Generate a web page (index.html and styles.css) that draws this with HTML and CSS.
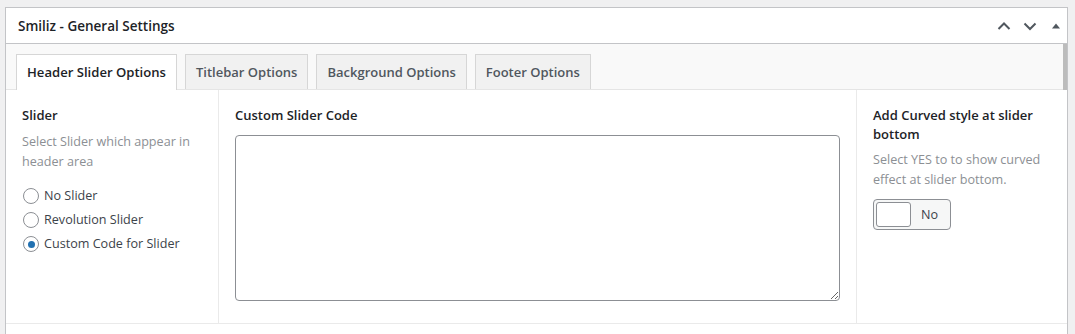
FILE: index.html
```html
<!DOCTYPE html>
<html lang="en">
<head>
    <meta charset="UTF-8">
    <meta name="viewport" content="width=device-width, initial-scale=1.0">
    <title>Smiliz - General Settings</title>
    <link rel="stylesheet" href="styles.css">
</head>
<body>
    <div class="postbox">
        <div class="postbox-header">
            <h2 class="postbox-title">Smiliz - General Settings</h2>
            <div class="handle-actions">
                <button class="handle-btn" aria-label="Move up">
                    <svg width="16" height="16" viewBox="0 0 16 16"><path d="M2.5 11 L8 5.5 L13.5 11" fill="none" stroke="#50575e" stroke-width="2"/></svg>
                </button>
                <button class="handle-btn" aria-label="Move down">
                    <svg width="16" height="16" viewBox="0 0 16 16"><path d="M2.5 5.5 L8 11 L13.5 5.5" fill="none" stroke="#50575e" stroke-width="2"/></svg>
                </button>
                <button class="handle-btn" aria-label="Toggle panel">
                    <svg width="12" height="12" viewBox="0 0 12 12"><path d="M2 8.5 L6 3.5 L10 8.5 Z" fill="#50575e"/></svg>
                </button>
            </div>
        </div>

        <div class="tabs-bar">
            <ul class="tabs">
                <li class="tab active">Header Slider Options</li>
                <li class="tab">Titlebar Options</li>
                <li class="tab">Background Options</li>
                <li class="tab">Footer Options</li>
            </ul>
            <div class="scroll-thumb"></div>
        </div>

        <div class="settings-row">
            <div class="field field-slider">
                <div class="field-label">Slider</div>
                <div class="field-desc">Select Slider which appear in header area</div>
                <ul class="radio-list">
                    <li><label><span class="radio"></span>No Slider</label></li>
                    <li><label><span class="radio"></span>Revolution Slider</label></li>
                    <li><label><span class="radio checked"></span>Custom Code for Slider</label></li>
                </ul>
            </div>

            <div class="field field-code">
                <div class="field-label">Custom Slider Code</div>
                <textarea class="code-input"></textarea>
            </div>

            <div class="field field-curve">
                <div class="field-label">Add Curved style at slider bottom</div>
                <div class="field-desc">Select YES to to show curved effect at slider bottom.</div>
                <div class="switch">
                    <span class="switch-knob"></span>
                    <span class="switch-text">No</span>
                </div>
            </div>
        </div>
    </div>
</body>
</html>
```

FILE: styles.css
```css
html, body {
    margin: 0;
    padding: 0;
    background: #f0f0f1;
    font-family: 'Open Sans', 'Noto Sans', sans-serif;
    font-size: 12.6px;
    color: #3c434a;
    overflow: hidden;
}

body {
    padding: 7px 7px 0 5px;
}

.postbox {
    background: #fff;
    border: 1px solid #c3c4c7;
    height: 340px;
}

.postbox-header {
    display: flex;
    align-items: center;
    justify-content: space-between;
    height: 35px;
    border-bottom: 1px solid #c3c4c7;
}

.postbox-title {
    margin: 0;
    padding-left: 12px;
    font-size: 13.5px;
    font-weight: 600;
    color: #1d2327;
}

.handle-actions {
    display: flex;
    align-items: center;
    gap: 4px;
    padding-right: 0;
}

.handle-btn {
    border: 0;
    background: none;
    padding: 0 2px;
    display: flex;
    align-items: center;
    justify-content: center;
    width: 22px;
    height: 22px;
}

.tabs-bar {
    position: relative;
    height: 45px;
    background: #f9f9f9;
    border-bottom: 1px solid #e5e5e5;
}

.scroll-thumb {
    position: absolute;
    right: 0;
    top: 0;
    width: 4px;
    height: 46px;
    background: #bcbcbc;
}

.tabs {
    display: flex;
    gap: 8px;
    list-style: none;
    margin: 0;
    padding: 10px 0 0 10px;
}

.tab {
    height: 35px;
    line-height: 34px;
    padding: 0 10px;
    border: 1px solid #d6d6d6;
    border-bottom: 0;
    background: #f1f1f1;
    color: #50575e;
    font-weight: 600;
    font-size: 13px;
    box-sizing: border-box;
}

.tab.active {
    height: 36px;
    background: #fff;
    color: #1d2327;
    font-size: 13.1px;
    padding: 0 10px;
    margin-bottom: -1px;
}

.settings-row {
    display: flex;
    border-bottom: 1px solid #eaeaea;
    height: 233px;
}

.field {
    padding: 15px 16px;
    box-sizing: border-box;
}

.field-slider {
    width: 213px;
    border-right: 1px solid #eaeaea;
}

.field-code {
    flex: 1;
    border-right: 1px solid #eaeaea;
}

.field-curve {
    width: 210px;
    padding-top: 16px;
}

.field-label {
    font-size: 13px;
    font-weight: 600;
    color: #1d2327;
    line-height: 20px;
    margin-bottom: 7px;
}

.field-desc {
    color: #8c8f94;
    line-height: 20px;
}

.field-curve .field-label {
    line-height: 19px;
    margin-bottom: 6px;
}

.radio-list {
    list-style: none;
    margin: 12px 0 0 1px;
    padding: 0;
}

.radio-list li {
    height: 24px;
}

.radio-list label {
    display: flex;
    align-items: center;
    gap: 5px;
    line-height: 24px;
}

.radio {
    width: 14px;
    height: 14px;
    border: 1px solid #8c8f94;
    border-radius: 50%;
    box-sizing: content-box;
    position: relative;
    background: #fff;
}

.radio.checked::after {
    content: "";
    position: absolute;
    left: 3.5px;
    top: 3.5px;
    width: 7px;
    height: 7px;
    border-radius: 50%;
    background: #2271b1;
}

.code-input {
    display: block;
    margin-top: 10px;
    width: 100%;
    height: 166px;
    border: 1px solid #8c8f94;
    border-radius: 4px;
    box-sizing: border-box;
    resize: vertical;
    font-family: inherit;
}

.switch {
    display: flex;
    align-items: center;
    margin-top: 9px;
    width: 78px;
    height: 31px;
    border: 1px solid #8c8f94;
    border-radius: 4px;
    background: #f6f7f7;
    box-sizing: border-box;
    padding: 2px;
}

.switch-knob {
    width: 35px;
    height: 25px;
    background: #fff;
    border: 1px solid #8c8f94;
    border-radius: 3px;
    box-sizing: border-box;
}

.switch-text {
    flex: 1;
    text-align: center;
    color: #3c434a;
}
```
